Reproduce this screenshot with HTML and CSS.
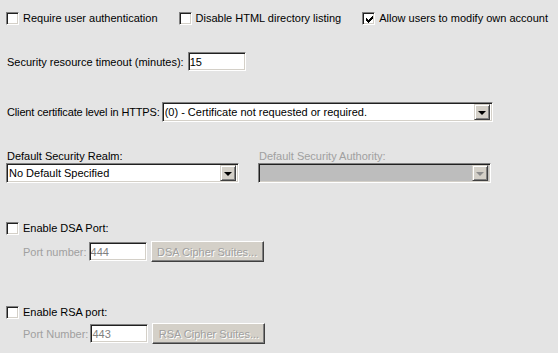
FILE: index.html
```html
<!DOCTYPE html>
<html lang="en">
<head>
  <meta charset="UTF-8" />
  <title>Security Settings</title>
  <link rel="stylesheet" href="styles.css">
</head>
<body>
  <div class="panel">
    <!-- General options -->
    <div class="checks">
      <label class="check"><span class="box"></span>Require user authentication</label>
      <label class="check"><span class="box"></span>Disable HTML directory listing</label>
      <label class="check">
        <span class="box">
          <svg width="9" height="9" viewBox="0 0 9 9"><path d="M1 3h1v1h1v1h1V4h1V3h1V2h1V1h1v3H7v1H6v1H5v1H4v1H3V7H2V6H1z" fill="#000"/></svg>
        </span>Allow users to modify own account
      </label>
    </div>

    <div class="field timeout">
      <span class="lbl">Security resource timeout (minutes):</span>
      <input class="text" type="text" value="15">
    </div>

    <div class="field cert">
      <span class="lbl">Client certificate level in HTTPS:</span>
      <div class="combo wide">
        <span class="value">(0) - Certificate not requested or required.</span>
        <span class="drop"><span class="arrow"></span></span>
      </div>
    </div>

    <!-- Realm / authority -->
    <div class="realms">
      <div class="col">
        <span class="lbl">Default Security Realm:</span>
        <div class="combo">
          <span class="value">No Default Specified</span>
          <span class="drop"><span class="arrow"></span></span>
        </div>
      </div>
      <div class="col disabled">
        <span class="lbl">Default Security Authority:</span>
        <div class="combo">
          <span class="value"></span>
          <span class="drop"><span class="arrow"></span></span>
        </div>
      </div>
    </div>

    <!-- Ports -->
    <div class="port-group dsa">
      <label class="check"><span class="box"></span>Enable DSA Port:</label>
      <div class="port-row">
        <span class="lbl">Port number:</span>
        <input class="text port" type="text" value="444" disabled>
        <button class="btn" disabled>DSA Cipher Suites...</button>
      </div>
    </div>

    <div class="port-group rsa">
      <label class="check"><span class="box"></span>Enable RSA port:</label>
      <div class="port-row">
        <span class="lbl">Port Number:</span>
        <input class="text port" type="text" value="443" disabled>
        <button class="btn" disabled>RSA Cipher Suites...</button>
      </div>
    </div>
  </div>
</body>
</html>
```

FILE: styles.css
```css
body {
  margin: 0;
  padding: 0;
  background-color: #e4e4e4;
  font-family: "Liberation Sans", Arial, sans-serif;
  font-size: 11px;
  color: #000;
}
.panel {
  width: 558px;
  height: 353px;
  box-sizing: border-box;
  padding: 12px 0 0 6px;
}
.checks {
  display: flex;
  gap: 21px;
}
.check {
  display: flex;
  align-items: center;
  height: 13px;
  line-height: 13px;
  white-space: nowrap;
}
.box {
  width: 13px;
  height: 13px;
  box-sizing: border-box;
  margin-right: 4px;
  background: #fff;
  border: 1px solid;
  border-color: #808080 #fff #fff #808080;
  box-shadow: inset 1px 1px #202020, inset -1px -1px #d4d0c8;
  display: flex;
  align-items: center;
  justify-content: center;
  padding: 1px 0 0 1px;
}
.box svg {
  display: block;
}
.lbl {
  padding-left: 1px;
  white-space: nowrap;
}
.field {
  display: flex;
  align-items: center;
}
.timeout {
  margin-top: 27px;
}
.timeout .lbl {
  margin-right: 4px;
}
.text {
  width: 58px;
  height: 19px;
  box-sizing: border-box;
  margin: 0;
  padding: 0 1px;
  font: inherit;
  color: #000;
  background: #fff;
  border: 1px solid;
  border-color: #808080 #fff #fff #808080;
  box-shadow: inset 1px 1px #202020, inset -1px -1px #d4d0c8;
  outline: none;
}
.cert {
  margin-top: 31px;
}
.cert .lbl {
  margin-right: 2px;
  letter-spacing: -0.15px;
}
.combo {
  display: flex;
  align-items: center;
  height: 20px;
  box-sizing: border-box;
  background: #fff;
  border: 1px solid;
  border-color: #808080 #fff #fff #808080;
  box-shadow: inset 1px 1px #202020, inset -1px -1px #d4d0c8;
  padding: 2px;
}
.combo.wide {
  width: 331px;
}
.combo .value {
  flex: 1;
  line-height: 16px;
  white-space: nowrap;
  overflow: hidden;
}
.drop {
  width: 16px;
  height: 16px;
  box-sizing: border-box;
  background: #d4d0c8;
  border: 1px solid;
  border-color: #d4d0c8 #404040 #404040 #d4d0c8;
  box-shadow: inset 1px 1px #fff, inset -1px -1px #808080;
  display: flex;
  align-items: center;
  justify-content: center;
}
.arrow {
  width: 0;
  height: 0;
  border-left: 4px solid transparent;
  border-right: 4px solid transparent;
  border-top: 4px solid #000;
  margin-top: 1px;
}
.realms {
  display: grid;
  grid-template-columns: 233px 233px;
  column-gap: 19px;
  margin-top: 28px;
}
.col .lbl {
  display: block;
  line-height: 13px;
}
.col.disabled .lbl {
  color: #a0a0a0;
}
.col.disabled .combo {
  background: #bdbdbd;
}
.col.disabled .arrow {
  border-top-color: #8c8c8c;
}
.dsa {
  margin-top: 39px;
}
.rsa {
  margin-top: 44px;
}
.port-row {
  display: flex;
  align-items: center;
  height: 21px;
  margin-top: 6px;
  padding-left: 16px;
}
.rsa .port-row {
  margin-top: 4px;
}
.port-row .lbl {
  color: #a0a0a0;
  margin-right: 2px;
}
.port {
  color: #808080;
  margin-right: 4px;
}
.btn {
  width: 113px;
  height: 21px;
  box-sizing: border-box;
  margin: 0;
  padding: 0;
  font: inherit;
  color: #a0a0a0;
  text-shadow: 1px 1px #fff;
  background: #d4d0c8;
  border: 1px solid;
  border-color: #fff #404040 #404040 #fff;
  box-shadow: inset -1px -1px #808080;
}
```
